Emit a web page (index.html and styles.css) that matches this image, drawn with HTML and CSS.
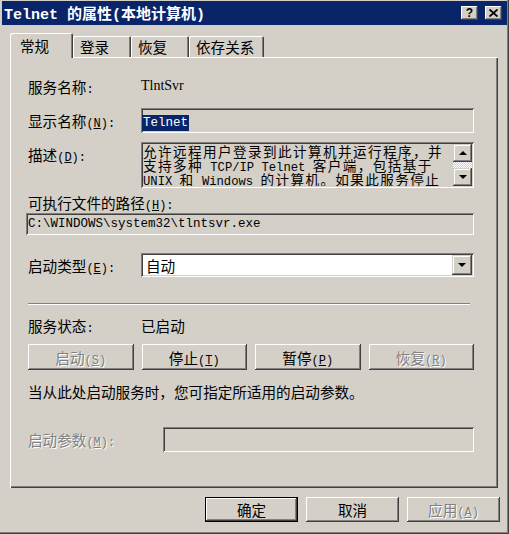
FILE: index.html
```html
<!DOCTYPE html>
<html lang="zh-CN">
<head>
    <meta charset="UTF-8">
    <title>Telnet 的属性(本地计算机)</title>
    <link rel="stylesheet" href="styles.css">
</head>
<body>

<div class="window">
    <div class="titlebar">
        <span class="title">Telnet 的属性(本地计算机)</span>
        <div class="title-btns">
            <span class="tbtn help">?</span>
            <span class="tbtn close">
                <svg width="9" height="8" viewBox="0 0 9 8"><path d="M0.5 0.5 L8.5 7.5 M8.5 0.5 L0.5 7.5" stroke="#000" stroke-width="1.8" fill="none"/></svg>
            </span>
        </div>
    </div>

    <div class="tabs">
        <div class="tab active">常规</div>
        <div class="tab">登录</div>
        <div class="tab">恢复</div>
        <div class="tab">依存关系</div>
    </div>

    <div class="panel">
        <div class="row r-name">
            <span class="label">服务名称<span class="lat">:</span></span>
            <span class="svc-name">TlntSvr</span>
        </div>

        <div class="row r-display">
            <span class="label">显示名称<span class="lat">(<u>N</u>):</span></span>
            <div class="field"><span class="sel">Telnet</span></div>
        </div>

        <div class="row r-desc">
            <span class="label">描述<span class="lat">(<u>D</u>):</span></span>
            <div class="field desc">
                <div class="desc-text">
                    <div class="line">允许远程用户登录到此计算机并运行程序，并</div>
                    <div class="line">支持多种<span class="lat"> TCP/IP Telnet </span>客户端，包括基于</div>
                    <div class="line"><span class="lat">UNIX </span>和<span class="lat"> Windows </span>的计算机。如果此服务停止</div>
                </div>
                <div class="vscroll">
                    <span class="sbtn"><i class="arrow up"></i></span>
                    <span class="track"></span>
                    <span class="sbtn"><i class="arrow down"></i></span>
                </div>
            </div>
        </div>

        <div class="path-label">可执行文件的路径<span class="lat">(<u>H</u>):</span></div>
        <div class="field path"><span class="lat">C:\WINDOWS\system32\tlntsvr.exe</span></div>

        <div class="row r-start">
            <span class="label">启动类型<span class="lat">(<u>E</u>):</span></span>
            <div class="field combo">
                <span>自动</span>
                <span class="sbtn drop"><i class="arrow down"></i></span>
            </div>
        </div>

        <div class="sep"></div>

        <div class="row r-status">
            <span class="label">服务状态<span class="lat">:</span></span>
            <span>已启动</span>
        </div>

        <div class="svc-btns">
            <button class="btn" disabled>启动<span class="lat">(<u>S</u>)</span></button>
            <button class="btn">停止<span class="lat">(<u>T</u>)</span></button>
            <button class="btn">暂停<span class="lat">(<u>P</u>)</span></button>
            <button class="btn" disabled>恢复<span class="lat">(<u>R</u>)</span></button>
        </div>

        <p class="hint">当从此处启动服务时，您可指定所适用的启动参数。</p>

        <div class="row r-params">
            <span class="label disabled">启动参数<span class="lat">(<u>M</u>):</span></span>
            <div class="field"></div>
        </div>
    </div>

    <div class="actions">
        <button class="btn default">确定</button>
        <button class="btn">取消</button>
        <button class="btn" disabled>应用<span class="lat">(<u>A</u>)</span></button>
    </div>
</div>

</body>
</html>
```

FILE: styles.css
```css
* {
    box-sizing: border-box;
}

body {
    margin: 0;
    background-color: #d4d0c8;
    font-family: "Noto Sans CJK SC", sans-serif;
    font-size: 14.6px;
    color: #000;
}

.lat {
    font-family: "Liberation Mono", monospace;
    font-size: 12px;
}

/* 窗口外框 */
.window {
    width: 509px;
    height: 534px;
    padding-top: 1px;
    box-shadow: inset -1px -1px #404040, inset -2px -2px #808080;
}

.titlebar {
    height: 24px;
    margin: 0 2px;
    padding: 0 5px 0 2px;
    background-color: #0a246a;
    display: flex;
    align-items: center;
    justify-content: space-between;
}

.title {
    color: #fff;
    font-family: "Liberation Mono", "Noto Sans CJK SC", monospace;
    font-size: 15px;
    font-weight: bold;
    white-space: pre;
}

.title-btns {
    display: flex;
    gap: 7px;
}

.tbtn {
    width: 17px;
    height: 14px;
    background-color: #d4d0c8;
    box-shadow: inset -1px -1px #404040, inset 1px 1px #fff, inset -2px -2px #808080;
    display: flex;
    align-items: center;
    justify-content: center;
    font-family: "Liberation Sans", sans-serif;
    font-weight: bold;
    font-size: 12px;
    line-height: 1;
}

.tbtn svg {
    display: block;
    margin: -1px 0 0 -1px;
}

/* 标签页 */
.tabs {
    display: flex;
    align-items: flex-end;
    height: 24px;
    margin-top: 8px;
    padding-left: 10px;
}

.tab {
    height: 21px;
    min-width: 58px;
    padding: 0 10px 0 7px;
    display: flex;
    align-items: center;
    box-shadow: inset 1px 1px #fff, inset -1px 0 #404040, inset -2px 0 #808080;
    border-radius: 2px 2px 0 0;
}

.tab.active {
    height: 25px;
    width: 63px;
    padding-left: 10px;
    margin-bottom: -1px;
    background-color: #d4d0c8;
    position: relative;
    z-index: 1;
}

.panel {
    width: 488px;
    height: 431px;
    margin-left: 10px;
    padding: 0 24px 0 18px;
    display: flex;
    flex-direction: column;
    box-shadow: inset 1px 1px #fff, inset -1px -1px #404040, inset -2px -2px #808080;
}

.row {
    display: flex;
    align-items: center;
}

.label {
    width: 113px;
    flex-shrink: 0;
    white-space: nowrap;
}

.label.disabled {
    width: 135px;
    color: #808080;
    text-shadow: 1px 1px 0 #fff;
}

.r-name { height: 20px; margin-top: 19px; }
.r-display { height: 25px; margin-top: 12px; }
.r-desc { height: 46px; margin-top: 9px; align-items: flex-start; }
.r-desc .label { margin-top: 2px; }
.r-start { height: 24px; margin-top: 18px; }
.r-status { height: 20px; margin-top: 10px; }
.r-params { height: 25px; margin-top: 25px; }

.svc-name {
    font-family: "Liberation Serif", serif;
    font-size: 14px;
}

/* 输入框 */
.field {
    flex: 1;
    align-self: stretch;
    background-color: #d4d0c8;
    box-shadow: inset 1px 1px #808080, inset -1px -1px #fff, inset 2px 2px #404040, inset -2px -2px #d4d0c8;
    padding: 1px 0 0 1px;
}

.sel {
    display: inline-block;
    background-color: #0a246a;
    color: #fff;
    font-family: "Liberation Mono", monospace;
    font-size: 12.5px;
    line-height: 16px;
    padding: 0 1px;
}

.desc {
    display: flex;
    padding: 2px;
    overflow: hidden;
}

.desc-text {
    flex: 1;
    font-size: 13.6px;
    letter-spacing: 1.4px;
    white-space: nowrap;
    overflow: hidden;
}

.desc-text .line {
    height: 14px;
    line-height: 14px;
}

.desc-text .lat {
    font-size: 12.2px;
    letter-spacing: 0;
    line-height: 14px;
}

.vscroll {
    width: 19px;
    display: flex;
    flex-direction: column;
}

.track {
    flex: 1;
    background: repeating-conic-gradient(#fff 0 25%, #d4d0c8 0 50%) 0 0 / 2px 2px;
}

.sbtn {
    height: 18px;
    display: flex;
    align-items: center;
    justify-content: center;
    background-color: #d4d0c8;
    box-shadow: inset -1px -1px #404040, inset 1px 1px #d4d0c8, inset -2px -2px #808080, inset 2px 2px #fff;
}

.arrow {
    width: 0;
    height: 0;
    border-left: 4px solid transparent;
    border-right: 4px solid transparent;
}

.arrow.up { border-bottom: 4px solid #000; }
.arrow.down { border-top: 4px solid #000; }

.path-label {
    height: 20px;
    margin-top: 5px;
    line-height: 20px;
}

.path {
    flex: 0 0 22px;
    margin-left: -2px;
    padding: 0 0 0 2px;
    display: flex;
    align-items: center;
}

.path .lat {
    font-size: 12.5px;
}

.combo {
    background-color: #fff;
    display: flex;
    align-items: center;
    padding: 2px 2px 2px 5px;
}

.drop {
    width: 20px;
    height: 20px;
    margin-left: auto;
}

.sep {
    height: 2px;
    margin: 26px 4px 0 0;
    border-top: 1px solid #808080;
    border-bottom: 1px solid #fff;
}

/* 按钮 */
.btn {
    margin: 0;
    padding: 0;
    border: none;
    background-color: #d4d0c8;
    font-family: inherit;
    font-size: 14.6px;
    color: #000;
    box-shadow: inset -1px -1px #404040, inset 1px 1px #fff, inset -2px -2px #808080;
}

.btn:disabled {
    color: #808080;
    text-shadow: 1px 1px 0 #fff;
}

.btn.default {
    box-shadow: inset 0 0 0 1px #000, inset -2px -2px #404040, inset 2px 2px #fff, inset -3px -3px #808080;
}

.svc-btns {
    display: grid;
    grid-template-columns: repeat(4, 1fr);
    gap: 8px;
    height: 26px;
    margin-top: 9px;
}

.hint {
    margin: 12px 0 0;
    height: 20px;
    line-height: 20px;
}

.actions {
    display: flex;
    justify-content: flex-end;
    gap: 8px;
    margin-top: 9px;
    padding-right: 9px;
}

.actions .btn {
    width: 93px;
    height: 25px;
}
```
